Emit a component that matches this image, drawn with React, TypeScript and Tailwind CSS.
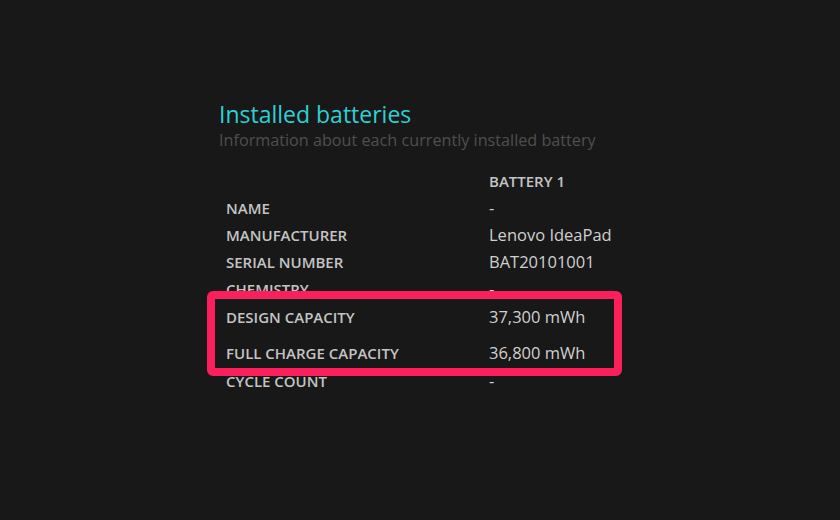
import React from "react";

const rows: { label: string; value: string; cls: string }[] = [
  { label: "NAME", value: "-", cls: "" },
  { label: "MANUFACTURER", value: "Lenovo IdeaPad", cls: "" },
  { label: "SERIAL NUMBER", value: "BAT20101001", cls: "" },
  { label: "CHEMISTRY", value: "-", cls: "" },
  { label: "DESIGN CAPACITY", value: "37,300 mWh", cls: "mt-[1px]" },
  { label: "FULL CHARGE CAPACITY", value: "36,800 mWh", cls: "mt-[9px]" },
  { label: "CYCLE COUNT", value: "-", cls: "mt-[1px]" },
];

export default function App() {
  return (
    <div
      className="w-[840px] h-[520px] bg-[#181818] overflow-hidden"
      style={{ fontFamily: '"Open Sans", "Noto Sans", sans-serif' }}
    >
      <div className="pl-[219px] pt-[99px]">
        <div className="text-[23px] leading-[30px] text-[#2fd0d3]">Installed batteries</div>
        <div className="text-[16.2px] leading-[22px] text-[#4f4f4f]">
          Information about each currently installed battery
        </div>
        <div className="relative mt-[17px] pl-[7px]">
          <div className="flex h-[27px] items-center">
            <div className="w-[263px]" />
            <div className="text-[15px] font-semibold text-[#c4c4c4]">BATTERY 1</div>
          </div>
          {rows.map((r) => (
            <div key={r.label} className={`flex h-[27px] items-center ${r.cls}`}>
              <div className="w-[263px] text-[15px] font-semibold text-[#c4c4c4]">{r.label}</div>
              <div className="text-[16.5px] text-[#d0d0d0]">{r.value}</div>
            </div>
          ))}
          <div className="absolute left-[-12px] top-[123px] w-[415px] h-[85px] border-[8px] border-[#fb1f5c] rounded-[6px]" />
        </div>
      </div>
    </div>
  );
}
